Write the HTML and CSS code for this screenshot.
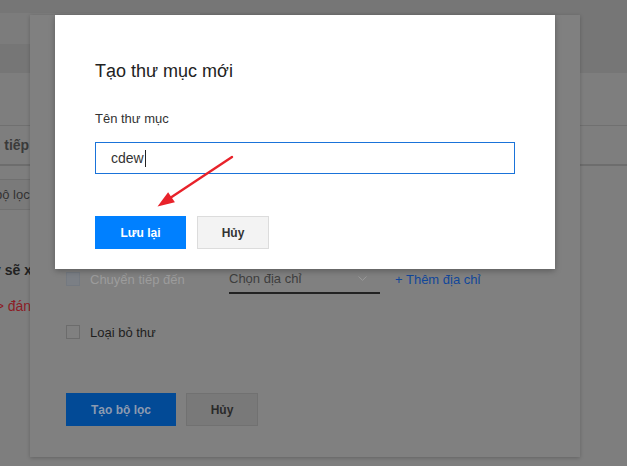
FILE: index.html
```html
<!DOCTYPE html>
<html lang="vi">
<head>
<meta charset="utf-8">
<title>Tạo thư mục mới</title>
<link rel="stylesheet" href="styles.css">
</head>
<body>
<div class="app">
  <header class="topbar"><div class="search"></div></header>
  <main class="content">
    <div class="thead"><span class="th">Chuyển tiếp đến</span></div>
    <div class="toolbar"><span class="ghost-btn">Tạo bộ lọc</span></div>
    <p class="note">Bộ lọc này sẽ xử lý thư</p>
    <p class="action">-&gt; đánh dấu là đã đọc</p>
  </main>
</div>

<section class="filter-dialog">
  <div class="frow">
    <span class="cbox cbox-disabled"></span>
    <span class="flabel flabel-disabled">Chuyển tiếp đến</span>
    <span class="select">
      <span class="select-text">Chọn địa chỉ</span>
      <svg class="chev" width="9" height="5" viewBox="0 0 9 5"><path d="M0.5 0.5 L4.5 4.3 L8.5 0.5" fill="none" stroke="#9a9a9a" stroke-width="1"/></svg>
    </span>
    <span class="add-link">+ Thêm địa chỉ</span>
  </div>
  <div class="frow frow-2">
    <span class="cbox"></span>
    <span class="flabel">Loại bỏ thư</span>
  </div>
  <div class="factions">
    <span class="btn btn-primary-dim">Tạo bộ lọc</span>
    <span class="btn btn-cancel-dim">Hủy</span>
  </div>
</section>

<section class="modal">
  <h1 class="modal-title">Tạo thư mục mới</h1>
  <label class="modal-label">Tên thư mục</label>
  <div class="text-input"><span class="input-value">cdew</span><span class="caret"></span></div>
  <div class="modal-actions">
    <span class="btn btn-primary">Lưu lại</span>
    <span class="btn btn-cancel">Hủy</span>
  </div>
</section>

<svg class="arrow" width="627" height="466" viewBox="0 0 627 466">
  <line x1="232" y1="157" x2="170.5" y2="197.7" stroke="#e8222a" stroke-width="2.4" stroke-linecap="round"/>
  <polygon points="157.5,206.5 168.1,192.2 174.9,202.2" fill="#e8222a"/>
</svg>
</body>
</html>
```

FILE: styles.css
```css
* { box-sizing: border-box; }

html, body {
  margin: 0;
  padding: 0;
}

body {
  width: 627px;
  height: 466px;
  overflow: hidden;
  background: #767676;
  font-family: "Liberation Sans", Arial, sans-serif;
  position: relative;
}

/* dimmed background page */
.topbar {
  height: 60px;
}

.search {
  margin-top: 13px;
  width: 200px;
  height: 31px;
  background: #7c7c7c;
}

.content {
  background: #7e7e7e;
  height: 406px;
  padding-top: 52px;
}

.thead {
  height: 41px;
  border-top: 1px solid #707070;
  border-bottom: 2px solid #6d6d6d;
  display: flex;
  align-items: center;
}

.th {
  margin-left: -51px;
  font-size: 14px;
  font-weight: bold;
  color: #3a3a3a;
  white-space: nowrap;
}

.toolbar {
  margin-top: 13px;
  display: flex;
}

.ghost-btn {
  margin-left: -42px;
  height: 31px;
  padding: 0 10px;
  display: flex;
  align-items: center;
  border: 1px solid #707070;
  background: #7a7a7a;
  font-size: 13px;
  color: #333;
  white-space: nowrap;
}

.note {
  margin: 50px 0 0 -70px;
  line-height: 20px;
  font-size: 14px;
  font-weight: bold;
  color: #222;
  white-space: nowrap;
}

.action {
  margin: 16px 0 0 -9px;
  line-height: 20px;
  font-size: 14px;
  color: #8c1d26;
  white-space: nowrap;
}

/* dimmed filter dialog behind */
.filter-dialog {
  position: absolute;
  left: 30px;
  top: 15px;
  width: 550px;
  height: 442px;
  background: #808080;
  box-shadow: 0 1px 4px rgba(0, 0, 0, 0.22);
  padding: 250px 36px 0;
  display: flex;
  flex-direction: column;
}

.frow {
  height: 28px;
  display: flex;
  align-items: center;
}

.frow-2 {
  margin-top: 25px;
}

.cbox {
  width: 14px;
  height: 14px;
  border: 1px solid #6c6c6c;
  background: #808080;
  margin-right: 10px;
  flex: none;
}

.cbox-disabled {
  background: #7b7f85;
  border-color: #747980;
}

.flabel {
  font-size: 13px;
  color: #1e1e1e;
  white-space: nowrap;
}

.flabel-disabled {
  width: 139px;
  flex: none;
  color: #9c9c9c;
}

.select {
  width: 151px;
  height: 28px;
  border-bottom: 2px solid #222;
  display: flex;
  align-items: center;
  justify-content: space-between;
  padding: 0 13px 0 0;
  margin-top: 1px;
  flex: none;
}

.select-text {
  font-size: 13px;
  color: #3e3e3e;
  white-space: nowrap;
}

.chev {
  display: block;
}

.add-link {
  margin-left: 15px;
  font-size: 13px;
  color: #11479a;
  white-space: nowrap;
}

.factions {
  margin-top: 47px;
  display: flex;
  gap: 10px;
}

.btn {
  height: 33px;
  display: flex;
  align-items: center;
  justify-content: center;
  font-size: 12px;
  font-weight: bold;
  white-space: nowrap;
}

.btn-primary-dim {
  width: 110px;
  background: #024a96;
  color: #8c9bb0;
}

.btn-cancel-dim {
  width: 72px;
  background: #797979;
  border: 1px solid #717171;
  color: #2a2a2a;
}

/* new-folder modal */
.modal {
  position: absolute;
  left: 55px;
  top: 15px;
  width: 500px;
  height: 254px;
  background: #fff;
  box-shadow: 0 2px 6px rgba(0, 0, 0, 0.28);
  padding: 44px 40px 20px;
  display: flex;
  flex-direction: column;
}

.modal-title {
  margin: 0;
  font-size: 18px;
  line-height: 24px;
  font-weight: normal;
  color: #222;
}

.modal-label {
  margin-top: 28px;
  font-size: 13px;
  line-height: 16px;
  color: #333;
}

.text-input {
  margin-top: 15px;
  width: 420px;
  height: 32px;
  border: 1px solid #1a73d9;
  padding-left: 15px;
  display: flex;
  align-items: center;
}

.input-value {
  font-size: 14px;
  color: #333;
}

.caret {
  width: 1px;
  height: 17px;
  background: #222;
  margin-left: 1px;
}

.modal-actions {
  margin-top: 42px;
  display: flex;
  gap: 11px;
}

.btn-primary {
  width: 91px;
  background: #0080ff;
  color: #fff;
}

.btn-cancel {
  width: 72px;
  background: #f3f3f3;
  border: 1px solid #dcdcdc;
  color: #333;
}

.arrow {
  position: absolute;
  left: 0;
  top: 0;
  pointer-events: none;
}
```
